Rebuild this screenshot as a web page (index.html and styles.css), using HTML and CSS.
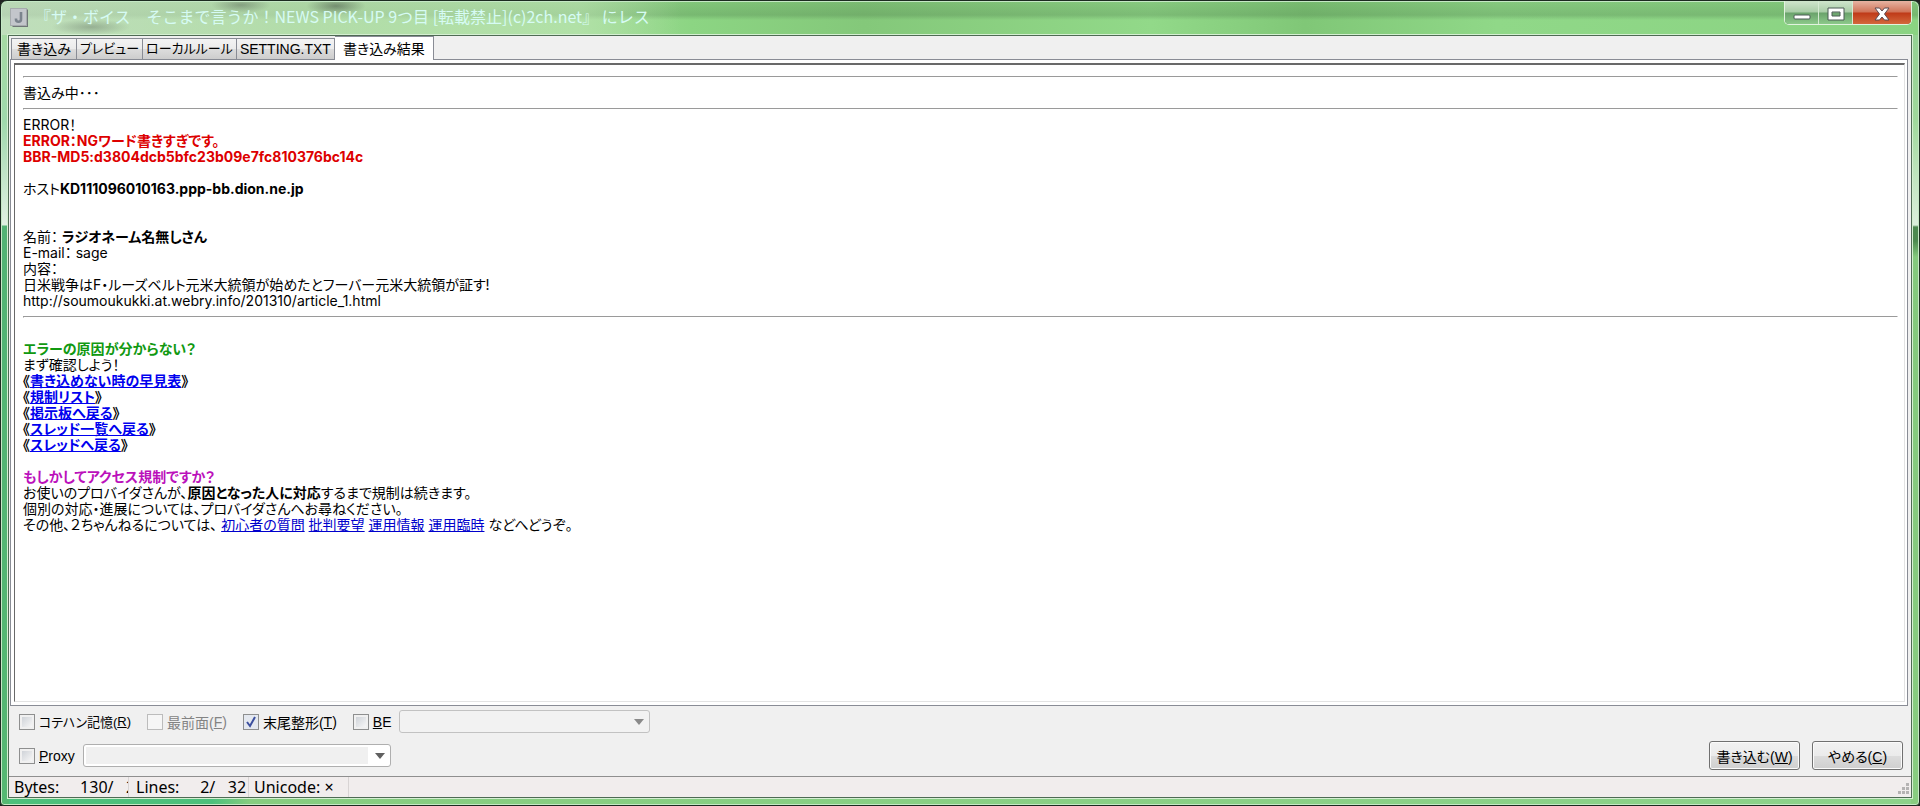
FILE: index.html
```
<!DOCTYPE html>
<html lang="ja">
<head>
    <meta charset="UTF-8">
    <meta name="viewport" content="width=device-width, initial-scale=1.0">
    <title>にレス</title>
    <link rel="stylesheet" href="styles.css">
</head>
<body>
    <div class="window">
        <header class="titlebar">
            <svg class="app-icon" width="19" height="20" viewBox="0 0 19 20">
                <path d="M1 1h16l1 1v17H3l-2-2z" fill="#6f7677"/>
                <rect x="0.5" y="0.5" width="16" height="17" fill="#c3c6cb" stroke="#a6abad"/>
                <path d="M11 4v7.200a2.500 2.500 0 0 1-5 0v-.7" fill="none" stroke="#7b838d" stroke-width="2.600"/>
            </svg>
            <h1 class="title">『ザ・ボイス　そこまで言うか！NEWS PICK-UP 9つ目 [転載禁止](c)2ch.net』 にレス</h1>
            <div class="window-buttons">
                <button class="window-button minimize" aria-label="最小化">
                    <svg width="18" height="7" viewBox="0 0 18 7"><rect x="1" y="1" width="16" height="4" rx="1" fill="#fff" stroke="#4b5b55"/></svg>
                </button>
                <button class="window-button" aria-label="最大化">
                    <svg width="18" height="14" viewBox="0 0 18 14"><path d="M1 1h16v12H1zM5 5v4h8V5z" fill="#fff" fill-rule="evenodd" stroke="#4b5b55"/></svg>
                </button>
                <button class="window-button close" aria-label="閉じる">
                    <svg width="16" height="14" viewBox="0 0 16 14"><path d="M1 1h4.500L8 4l2.500-3H15l-4.500 6 4.500 6h-4.500L8 10l-2.500 3H1l4.500-6z" fill="#fff" stroke="#5b4a50"/></svg>
                </button>
            </div>
        </header>

        <main class="client">
            <nav class="tabs">
                <button class="tab">書き込み</button>
                <button class="tab kana">プレビュー</button>
                <button class="tab kana">ローカルルール</button>
                <button class="tab latin">SETTING.TXT</button>
                <button class="tab active">書き込み結果</button>
            </nav>

            <section class="panel">
                <div class="result">
                    <hr>
                    書込み中･･･
                    <hr>
                    ERROR！<br>
                    <b class="error">ERROR：NGワード書きすぎです。<br>
                    BBR-MD5:d3804dcb5bfc23b09e7fc810376bc14c</b><br>
                    <br>
                    ホスト<b>KD111096010163.ppp-bb.dion.ne.jp</b><br>
                    <br>
                    <br>
                    名前： <b>ラジオネーム名無しさん</b><br>
                    E-mail： sage<br>
                    内容：<br>
                    日米戦争はF・ルーズベルト元米大統領が始めたとフーバー元米大統領が証す!<br>
                    http://soumoukukki.at.webry.info/201310/article_1.html
                    <hr>
                    <br>
                    <b class="question">エラーの原因が分からない？</b><br>
                    まず確認しよう！<br>
                    <b>《<a href="#">書き込めない時の早見表</a>》</b><br>
                    <b>《<a href="#">規制リスト</a>》</b><br>
                    <b>《<a href="#">掲示板へ戻る</a>》</b><br>
                    <b>《<a href="#">スレッド一覧へ戻る</a>》</b><br>
                    <b>《<a href="#">スレッドへ戻る</a>》</b><br>
                    <br>
                    <b class="access">もしかしてアクセス規制ですか？</b><br>
                    お使いのプロバイダさんが、<b>原因となった人に対応</b>するまで規制は続きます。<br>
                    個別の対応・進展については、プロバイダさんへお尋ねください。<br>
                    その他、２ちゃんねるについては、 <a href="#">初心者の質問</a> <a href="#">批判要望</a> <a href="#">運用情報</a> <a href="#">運用臨時</a> などへどうぞ。
                </div>
            </section>

            <form class="options">
                <div class="row">
                    <label class="check kana"><input type="checkbox">コテハン記憶(<u>R</u>)</label>
                    <label class="check disabled"><input type="checkbox" disabled>最前面(<u>F</u>)</label>
                    <label class="check"><input type="checkbox" checked>末尾整形(<u>T</u>)</label>
                    <label class="check short"><input type="checkbox"><u>B</u>E</label>
                    <select class="combo" aria-label="BE" disabled><option></option></select>
                </div>
                <div class="row">
                    <label class="check short"><input type="checkbox"><u>P</u>roxy</label>
                    <select class="combo proxy" aria-label="Proxy"><option></option></select>
                    <div class="actions">
                        <button class="push" type="button">書き込む(<u>W</u>)</button>
                        <button class="push" type="button">やめる(<u>C</u>)</button>
                    </div>
                </div>
            </form>

            <footer class="status">
                <span class="cell bytes">Bytes:     130/   2</span>
                <span class="cell lines">Lines:     2/   32</span>
                <span class="cell unicode">Unicode: ×</span>
                <svg class="grip" width="12" height="12" viewBox="0 0 12 12">
                    <path d="M9 0h3v3H9zM9 4h3v3H9zM5 4h3v3H5zM9 8h3v3H9zM5 8h3v3H5zM1 8h3v3H1z" fill="#b5b3b3"/>
                </svg>
            </footer>
        </main>
    </div>
</body>
</html>
```
FILE: styles.css
```
* {
    box-sizing: border-box;
}

html, body {
    margin: 0;
    height: 100%;
    background: #222;
}

body {
    font-family: "Liberation Sans", "Noto Sans CJK JP", sans-serif;
    font-size: 14px;
    font-feature-settings: "palt";
    color: #000;
}

button, select, input {
    font: inherit;
    font-feature-settings: inherit;
    color: inherit;
    margin: 0;
}

/* Aero frame */
.window {
    display: flex;
    flex-direction: column;
    height: 100vh;
    padding: 0 7px 7px;
    border: 1px solid #1c2b20;
    border-radius: 7px 7px 4px 4px;
    box-shadow: inset 0 0 0 1px #c5e8c5;
    background:
        radial-gradient(ellipse at center, rgba(60, 70, 60, 0.5), rgba(60, 70, 60, 0) 70%) 305px -4px / 60px 18px no-repeat,
        radial-gradient(ellipse at center, rgba(70, 80, 70, 0.4), rgba(70, 80, 70, 0) 70%) 210px -4px / 60px 16px no-repeat,
        radial-gradient(ellipse at center, rgba(80, 90, 80, 0.35), rgba(80, 90, 80, 0) 70%) 50px 18px / 80px 16px no-repeat,
        linear-gradient(90deg, rgba(215, 232, 212, 0.6), rgba(190, 225, 180, 0.6) 300px, rgba(190, 230, 180, 0.5) 580px, rgba(190, 230, 180, 0) 680px) top / 100% 34px no-repeat,
        linear-gradient(rgba(60, 100, 60, 0.12), rgba(60, 100, 60, 0.25) 14px, rgba(60, 100, 60, 0) 19px) top / 100% 34px no-repeat,
        linear-gradient(90deg, #9dcf98, #a4dc9a 30%, #8cd583 36%, #84c87a 45%, #92d989 60%, #80c777 68%, #90d888 78%, #8ad382) top / 100% 34px no-repeat,
        linear-gradient(#a8dba0, #9fd8ac 120px, #e0f0e2 224px, #52b374 225px, #55b872) left / 8px 100% no-repeat,
        linear-gradient(#8fcf90, #a0d89c 120px, #dcefdc 224px, #4d8a50 226px, #4d8a50 240px, #84c97d 256px, #88cc80) right / 8px 100% no-repeat,
        linear-gradient(90deg, #4cc07c 11%, #86cd80 13%, #8cd28a) #8bcf88;
}

.titlebar {
    display: flex;
    align-items: center;
    flex: 0 0 34px;
    padding-left: 2px;
}

.title {
    flex: 1;
    margin: 0 0 4px 6px;
    font-family: "Noto Sans CJK JP", sans-serif;
    font-feature-settings: normal;
    font-size: 16px;
    font-weight: normal;
    line-height: 24px;
    color: #d6fbf4;
    white-space: nowrap;
}

.window-buttons {
    display: flex;
    align-self: flex-start;
    height: 24px;
    border: 1px solid #e2f3e0;
    border-top: none;
    border-radius: 0 0 5px 5px;
    box-shadow: inset 0 0 0 1px #4c6b4d;
    overflow: hidden;
}

.window-button {
    display: flex;
    align-items: center;
    justify-content: center;
    width: 34px;
    padding: 2px 0 0;
    border: none;
    border-right: 1px solid #d5ead2;
    background: linear-gradient(#cfe5cc, #a9cda7 48%, #6aa26b 52%, #8cc98a);
}

.minimize {
    padding-top: 10px;
}

.close {
    width: 58px;
    border-right: none;
    background: linear-gradient(#e6b3a2, #d07458 48%, #bf3a18 52%, #d4683c);
}

.client {
    display: flex;
    flex-direction: column;
    flex: 1;
    min-height: 0;
    border: 1px solid #4f6b54;
    box-shadow: 0 0 0 1px #d5efd2;
    background: #f0f0f0;
}

/* Tabs */
.tabs {
    display: flex;
    align-items: flex-end;
    height: 23px;
    padding-left: 2px;
}

.tab {
    height: 21px;
    padding: 0 5px;
    border: 1px solid #898c95;
    border-bottom: none;
    border-left-width: 0;
    background: linear-gradient(#f3f3f3, #ebebeb 50%, #dddddd 50%, #cdcdcd);
    line-height: 20px;
    white-space: nowrap;
}

.tab:first-child {
    border-left-width: 1px;
}

.tab.active {
    z-index: 1;
    height: 24px;
    margin-bottom: -1px;
    padding: 0 8px;
    background: #fff;
}

.kana {
    font-size: 13px;
}

.tab.kana,
.tab.latin {
    padding: 0 3px;
}

.panel {
    display: flex;
    flex: 1;
    min-height: 0;
    margin: 0 3px 0 1px;
    padding: 3px 2px 3px 3px;
    border: 1px solid #898c95;
    background: #fff;
}

.result {
    flex: 1;
    padding: 4px 6px 0 8px;
    border: 1px solid #e3e3e3;
    border-top: 2px solid #696969;
    border-left: 1px solid #696969;
    font-family: Inter, "Noto Sans CJK JP", sans-serif;
    line-height: 16px;
    overflow: hidden;
}

.result hr {
    height: 2px;
    margin: 7px 0;
    border: 1px solid;
    border-color: #9a9a9a #fff #fff #9a9a9a;
}

.result a {
    color: #0000cc;
}

.result b a {
    color: #0000ee;
}

.error {
    color: #dd0000;
}

.question {
    color: #119911;
}

.access {
    color: #bb11bb;
}

/* Options */
.options {
    display: flex;
    flex-direction: column;
    gap: 8px;
    padding: 4px 8px 6px 10px;
}

.row {
    display: flex;
    align-items: center;
    min-height: 23px;
}

.check {
    display: flex;
    align-items: center;
    margin-right: 16px;
    white-space: nowrap;
}

.check.short {
    margin-right: 8px;
}

.check input {
    appearance: none;
    width: 16px;
    height: 16px;
    margin-right: 4px;
    border: 1px solid #8e8f8f;
    background: linear-gradient(135deg, #cfd3d8, #f6f6f6) content-box #f4f4f4;
    padding: 2px;
}

.check input:checked {
    background: url("data:image/svg+xml,%3Csvg xmlns='http://www.w3.org/2000/svg' viewBox='0 0 14 14'%3E%3Cpath d='M3 7l3 4 5-9' fill='none' stroke='%233c4f9e' stroke-width='2'/%3E%3C/svg%3E") center / 14px no-repeat #e4e8ef;
}

.check input:disabled {
    border-color: #bcbcbc;
    background: #f6f6f6;
}

.disabled {
    color: #838383;
}

.combo {
    appearance: none;
    width: 251px;
    height: 23px;
    border: 1px solid #afafaf;
    border-radius: 3px;
    background: url("data:image/svg+xml,%3Csvg xmlns='http://www.w3.org/2000/svg' viewBox='0 0 10 6'%3E%3Cpath d='M0 0h10L5 6z' fill='%23606060'/%3E%3C/svg%3E") right 5px center / 10px 6px no-repeat #f4f4f4;
}

.combo.proxy {
    width: 308px;
    background:
        url("data:image/svg+xml,%3Csvg xmlns='http://www.w3.org/2000/svg' viewBox='0 0 10 6'%3E%3Cpath d='M0 0h10L5 6z' fill='%23606060'/%3E%3C/svg%3E") right 5px center / 10px 6px no-repeat,
        linear-gradient(#f0f0f0, #f0f0f0) 2px 2px / 282px 17px no-repeat #fff;
}

.actions {
    display: flex;
    gap: 12px;
    margin-left: auto;
}

.push {
    width: 91px;
    height: 29px;
    padding: 0;
    border: 1px solid #707070;
    border-radius: 3px;
    box-shadow: inset 0 0 0 1px #fbfbfb;
    background: linear-gradient(#f2f2f2, #ebebeb 50%, #dddddd 50%, #cfcfcf);
}

/* Status bar */
.status {
    display: flex;
    height: 21px;
    border-top: 1px solid #8f8f8f;
    background: #f1eded;
    font-family: "Noto Sans", sans-serif;
    font-size: 16px;
    line-height: 20px;
}

.cell {
    width: 120px;
    padding-left: 5px;
    border-right: 1px solid #d8d4d4;
    white-space: pre;
}

.cell.bytes {
    overflow: hidden;
}

.cell.lines {
    padding-left: 7px;
}

.cell.unicode {
    width: 100px;
}

.grip {
    align-self: flex-end;
    margin: 0 2px 2px auto;
}
```
